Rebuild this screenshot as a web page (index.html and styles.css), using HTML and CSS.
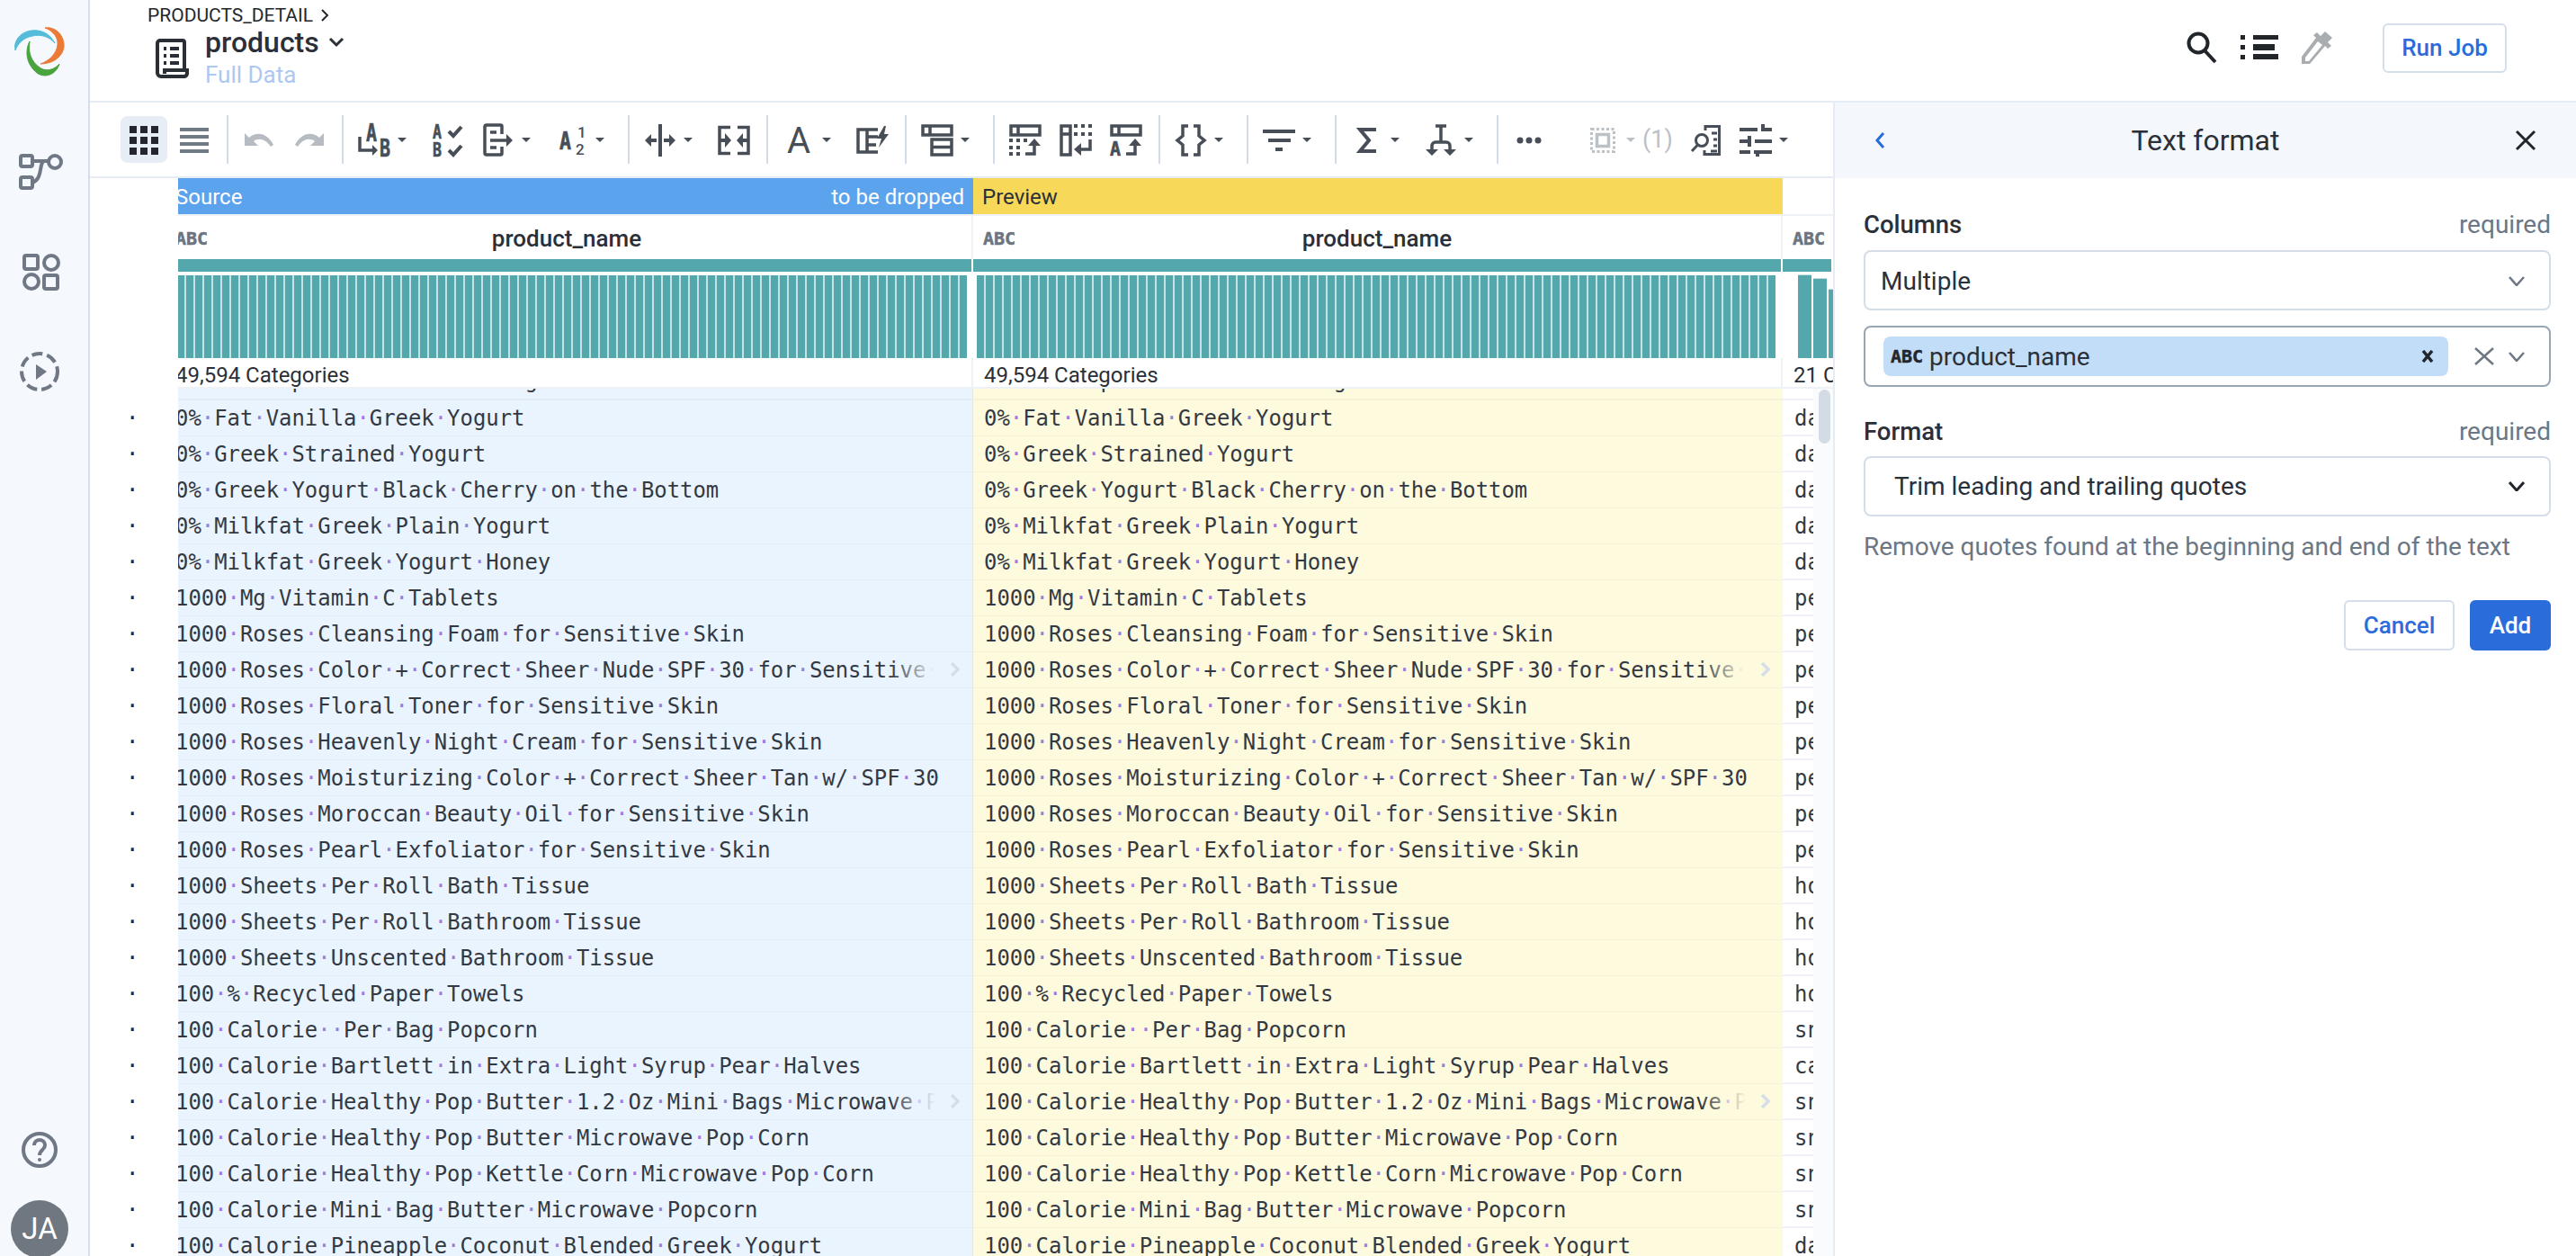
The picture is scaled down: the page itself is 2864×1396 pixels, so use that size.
FILE: index.html
```html
<!DOCTYPE html>
<html lang="en">
  <head>
    <meta charset="UTF-8" />
    <title>products - Full Data</title>
    <link rel="stylesheet" href="styles.css">
  </head>
  <body>
    <div class="app">
      <nav class="sidebar">
        <svg class="logo" viewBox="0 0 56 56">
          <g transform="translate(-16 -30)">
            <path fill="#55bcd9" stroke="#55bcd9" d="M17 56C14 42 28 32 42 34C50 35 57 40 61 48C54 40 45 38 36 40C26 42 20 48 17 56Z" />
            <path fill="#ec7a37" stroke="#ec7a37" d="M50 31C62 29 72 40 71 52C70 62 60 71 45 71C54 68 63 60 64 50C65 42 59 34 50 31Z" />
            <path fill="#4aa43e" stroke="#4aa43e" d="M33 46C27 58 30 72 41 81C49 87 62 84 66 71C60 78 51 80 44 75C34 68 31 57 33 46Z" />
          </g>
        </svg>
        <div class="side-nav">
          <svg class="side-icon" viewBox="0 0 56 44">
            <rect x="7" y="4" width="13" height="12" rx="2" />
            <rect x="7" y="28" width="13" height="12" rx="2" />
            <circle cx="45" cy="11" r="7" />
            <path d="M20 10H38M33 10C27 12 32 30 20 34" />
          </svg>
          <svg class="side-icon" viewBox="0 0 56 44">
            <rect x="11" y="4" width="15" height="15" rx="2" />
            <circle cx="41" cy="12" r="8" />
            <circle cx="19" cy="33" r="8" />
            <rect x="33" y="26" width="15" height="15" rx="2" />
          </svg>
          <svg class="side-icon" viewBox="0 0 56 44">
            <circle class="dashed" cx="28" cy="22" r="20" />
            <path class="solid" d="M24 14L36 22L24 31Z" />
          </svg>
        </div>
        <div class="side-bottom">
          <svg class="side-icon help" viewBox="0 0 56 44">
            <circle cx="28" cy="22" r="18" />
            <path d="M22 17C22 9 34 9 34 17C34 22 28 22 28 28" />
            <circle class="solid" cx="28" cy="33" r="2" />
          </svg>
          <div class="avatar">JA</div>
        </div>
      </nav>

      <div class="main">
        <header class="topbar">
          <div class="top-left">
            <div class="crumb">PRODUCTS_DETAIL
              <svg class="crumb-arrow" viewBox="0 0 10 16"><path d="M2 2L8 8L2 14" /></svg>
            </div>
            <div class="title-row">
              <svg class="doc-icon" viewBox="0 0 40 44">
                <path d="M5 38V5a3 3 0 0 1 3-3H33a2 2 0 0 1 2 2V35" />
                <path d="M5 38a4 4 0 0 0 4 4H35a4 4 0 0 0 3-3V35H13V39" />
                <path d="M12 11H15M19 11H29M12 19H15M19 19H29M12 27H15M19 27H29" />
              </svg>
              <div>
                <div class="title">products
                  <svg class="title-caret" viewBox="0 0 18 12"><path d="M2 2L9 9L16 2" /></svg>
                </div>
                <div class="subtitle">Full Data</div>
              </div>
            </div>
          </div>
          <div class="top-right">
            <svg class="top-icon" viewBox="0 0 36 36">
              <circle cx="14" cy="13" r="10.5" />
              <path d="M21 21L33 34" />
            </svg>
            <svg class="top-list" viewBox="0 0 42 28">
              <rect x="0" y="0" width="5" height="5" /><rect x="14" y="0" width="28" height="5" />
              <rect x="0" y="11" width="5" height="5" /><rect x="14" y="10" width="24" height="7" />
              <rect x="0" y="22" width="5" height="5" /><rect x="14" y="21" width="28" height="6" />
            </svg>
            <svg class="top-dropper" viewBox="0 0 36 36">
              <path d="M1 36V28L17 7L14 4L18 1L22 5L27 0L35 7L30 12L34 16L30 19L27 16L10 36Z" />
              <path class="cut" d="M5 29L19 11L24 15L9 33H5Z" />
            </svg>
            <button class="btn btn-run">Run Job</button>
          </div>
        </header>

        <div class="workspace">
          <section class="editor">
            <div class="toolbar">
              <div class="tb tb-active">
                <svg viewBox="0 0 36 36" class="dark">
                  <rect x="2" y="3" width="8" height="8" /><rect x="14" y="3" width="8" height="8" /><rect x="26" y="3" width="8" height="8" />
                  <rect x="2" y="15" width="8" height="8" /><rect x="14" y="15" width="8" height="8" /><rect x="26" y="15" width="8" height="8" />
                  <rect x="2" y="27" width="8" height="8" /><rect x="14" y="27" width="8" height="8" /><rect x="26" y="27" width="8" height="8" />
                </svg>
              </div>
              <div class="tb">
                <svg viewBox="0 0 36 36" class="mid">
                  <rect x="2" y="5" width="32" height="4" /><rect x="2" y="13" width="32" height="4" /><rect x="2" y="21" width="32" height="4" /><rect x="2" y="29" width="32" height="4" />
                </svg>
              </div>
              <i class="sep"></i>
              <div class="tb">
                <svg viewBox="0 0 36 36" class="off"><path d="M2 11V25H17L12 20C17 16 25 17 31 26L34 24C28 12 16 8 7 16Z" /></svg>
              </div>
              <div class="tb">
                <svg viewBox="0 0 36 36" class="off"><path transform="matrix(-1 0 0 1 36 0)" d="M2 11V25H17L12 20C17 16 25 17 31 26L34 24C28 12 16 8 7 16Z" /></svg>
              </div>
              <i class="sep"></i>
              <div class="tb tb-menu">
                <svg viewBox="0 0 36 36">
                  <text class="tl" x="9" y="20" textLength="12" lengthAdjust="spacingAndGlyphs">A</text>
                  <text class="tl" x="24" y="37" textLength="12" lengthAdjust="spacingAndGlyphs">B</text>
                  <path class="ln" d="M2 15V30H18" /><path d="M16 24L22 30L16 36Z" />
                </svg>
                <i class="caret"></i>
              </div>
              <div class="tb">
                <svg viewBox="0 0 36 36">
                  <text class="tl tl-sm" x="1" y="17" textLength="10" lengthAdjust="spacingAndGlyphs">A</text>
                  <text class="tl tl-sm" x="1" y="37" textLength="10" lengthAdjust="spacingAndGlyphs">B</text>
                  <path class="ln ln-4" d="M19 9L24 14L33 4M19 30L24 35L33 25" />
                </svg>
              </div>
              <div class="tb tb-menu">
                <svg viewBox="0 0 36 36">
                  <path class="ln" d="M22 12V3.5A1.5 1.5 0 0 0 20.500 2H5A2 2 0 0 0 3 4V33A2 2 0 0 0 5 35H20.500A1.500 1.500 0 0 0 22 33.500V26" />
                  <path class="ln" d="M9 10H16M9 19H29M9 27H16" /><path d="M27 12L34 19L27 26Z" />
                </svg>
                <i class="caret"></i>
              </div>
              <div class="tb tb-menu">
                <svg viewBox="0 0 36 36">
                  <text class="tl" x="4" y="29" textLength="13" lengthAdjust="spacingAndGlyphs">A</text>
                  <text class="tl-num" x="24" y="16">1</text>
                  <text class="tl-num" x="22" y="35">2</text>
                </svg>
                <i class="caret"></i>
              </div>
              <i class="sep"></i>
              <div class="tb tb-menu">
                <svg viewBox="0 0 36 36">
                  <rect x="16" y="1" width="4" height="36" />
                  <path d="M1 19L8 12V17H14V21H8V26ZM35 19L28 12V17H22V21H28V26Z" />
                </svg>
                <i class="caret"></i>
              </div>
              <div class="tb">
                <svg viewBox="0 0 36 36">
                  <path class="ln" d="M14 4.500H2V33.500H14M22 4.500H34V33.500H22" />
                  <path d="M8 11L15 19L8 27V21H2V17H8ZM28 11L21 19L28 27V21H34V17H28Z" />
                </svg>
              </div>
              <i class="sep"></i>
              <div class="tb tb-menu">
                <svg viewBox="0 0 36 36"><text class="tl-big" x="18" y="33" text-anchor="middle">A</text></svg>
                <i class="caret"></i>
              </div>
              <div class="tb">
                <svg viewBox="0 0 36 36">
                  <path class="ln" d="M24 7H2V32H24M12 7V32M12 15H24M12 24H22" />
                  <path d="M31 3L23 17H28L25 27L36 12H31L33 3Z" />
                </svg>
              </div>
              <i class="sep"></i>
              <div class="tb tb-menu">
                <svg viewBox="0 0 36 36">
                  <path class="ln" d="M2 3H34V13H2ZM10 3V13" />
                  <path class="ln" d="M12 18H34V35H12ZM12 26.500H34" />
                </svg>
                <i class="caret"></i>
              </div>
              <i class="sep"></i>
              <div class="tb">
                <svg viewBox="0 0 36 36">
                  <path class="ln" d="M2 3H34V13H2ZM10 3V13" />
                  <rect x="0" y="17" width="4" height="4" /><rect x="8" y="17" width="4" height="4" /><rect x="16" y="17" width="4" height="4" />
                  <rect x="0" y="25" width="4" height="4" /><rect x="8" y="25" width="4" height="4" />
                  <rect x="0" y="32" width="4" height="4" /><rect x="8" y="32" width="4" height="4" />
                  <path class="ln" d="M18 34H28V22" /><path d="M21 25L28 17L35 25Z" />
                </svg>
              </div>
              <div class="tb">
                <svg viewBox="0 0 36 36">
                  <path class="ln" d="M2 3H12V35H2ZM2 12H12" />
                  <rect x="16" y="1" width="4" height="4" /><rect x="24" y="1" width="4" height="4" /><rect x="32" y="1" width="4" height="4" />
                  <rect x="16" y="10" width="4" height="4" /><rect x="24" y="10" width="4" height="4" /><rect x="32" y="10" width="4" height="4" />
                  <path class="ln" d="M34 18V29H22" /><path d="M24 22L16 29L24 36Z" />
                </svg>
              </div>
              <div class="tb">
                <svg viewBox="0 0 36 36">
                  <path class="ln" d="M2 3H34V13H2ZM10 3V13" />
                  <text class="tl tl-sm" x="0" y="36" textLength="12" lengthAdjust="spacingAndGlyphs">A</text>
                  <path class="ln" d="M18 34H28V22" /><path d="M21 25L28 17L35 25Z" />
                </svg>
              </div>
              <i class="sep"></i>
              <div class="tb tb-menu">
                <svg viewBox="0 0 36 36"><path class="ln" d="M15 3H9V14L3 19L9 24V35H15M21 3H27V14L33 19L27 24V35H21" /></svg>
                <i class="caret"></i>
              </div>
              <i class="sep"></i>
              <div class="tb tb-menu">
                <svg viewBox="0 0 36 36">
                  <rect x="0" y="7" width="36" height="4" /><rect x="6" y="17" width="25" height="4" /><rect x="14" y="27" width="8" height="4" />
                </svg>
                <i class="caret"></i>
              </div>
              <i class="sep"></i>
              <div class="tb tb-menu">
                <svg viewBox="0 0 36 36"><path class="ln ln-4" d="M28 7H10L20 19L10 31H28" /></svg>
                <i class="caret"></i>
              </div>
              <div class="tb tb-menu">
                <svg viewBox="0 0 36 36">
                  <path class="ln" d="M12 3H24M18 3V20M8 30V25A4 4 0 0 1 12 21H24A4 4 0 0 1 28 25V30" />
                  <path d="M1 29L8 36L15 29ZM21 29L28 36L35 29Z" />
                </svg>
                <i class="caret"></i>
              </div>
              <i class="sep"></i>
              <div class="tb">
                <svg viewBox="0 0 36 36"><circle cx="8" cy="19" r="3.500" /><circle cx="18" cy="19" r="3.500" /><circle cx="28" cy="19" r="3.500" /></svg>
              </div>
              <div class="tb tb-select">
                <svg viewBox="0 0 36 36" class="off">
                  <rect class="dotted" x="5.500" y="6.500" width="25" height="25" />
                  <rect class="ln off-ln" x="11.500" y="12.500" width="13" height="13" />
                </svg>
                <i class="caret caret-off"></i>
                <span class="count">(1)</span>
              </div>
              <div class="tb">
                <svg viewBox="0 0 36 36">
                  <path class="ln ln-3" d="M18 8V3.500H33.500V34.500H17V30" />
                  <path class="ln ln-3" d="M25 11H31M27 18H31M27 25H31M24 31H31" />
                  <circle class="ln ln-3" cx="14" cy="19" r="6.500" />
                  <path class="ln ln-3" d="M9.500 24L3 31" />
                </svg>
              </div>
              <div class="tb tb-menu">
                <svg viewBox="0 0 36 36">
                  <rect x="0" y="5" width="20" height="4" /><rect x="24" y="1" width="4" height="8" /><rect x="28" y="5" width="8" height="4" />
                  <rect x="0" y="18" width="9" height="4" /><rect x="9" y="14" width="4" height="12" /><rect x="17" y="18" width="19" height="4" />
                  <rect x="0" y="30" width="12" height="4" /><rect x="16" y="30" width="20" height="4" /><rect x="18" y="30" width="4" height="7" />
                </svg>
                <i class="caret"></i>
              </div>
            </div>

            <div class="grid-line bands">
              <div></div>
              <div class="band band-source"><span>Source</span><span>to be dropped</span></div>
              <div class="band band-preview">Preview</div>
              <div class="band"></div>
            </div>
            <div class="grid-line heads">
              <div></div>
              <div class="head head-source"><span class="abc">ABC</span><span class="head-name">product_name</span></div>
              <div class="head"><span class="abc">ABC</span><span class="head-name">product_name</span></div>
              <div class="head head-last"><span class="abc">ABC</span></div>
            </div>
            <div class="grid-line charts">
              <div></div>
              <div class="chart chart-source"><div class="chart-top"></div><div class="bars bars-source"></div></div>
              <div class="chart"><div class="chart-top"></div><div class="bars bars-preview"></div></div>
              <div class="chart chart-last">
                <div class="chart-top"></div>
                <div class="bars-few"><i class="bar-a"></i><i class="bar-b"></i><i class="bar-c"></i></div>
              </div>
            </div>
            <div class="grid-line counts">
              <div></div>
              <div class="count-cell count-source">49,594 Categories</div>
              <div class="count-cell">49,594 Categories</div>
              <div class="count-cell count-last">21 Categories</div>
            </div>
            <div class="rows" id="rows">
              <div class="thumb"></div>
            </div>
          </section>

          <aside class="panel">
            <div class="panel-head">
              <svg class="back" viewBox="0 0 12 20"><path d="M10 2L3 10L10 18" /></svg>
              <div class="panel-title">Text format</div>
              <svg class="close" viewBox="0 0 24 24"><path d="M2 2L22 22M22 2L2 22" /></svg>
            </div>
            <div class="panel-body">
              <div class="field-label"><span class="label-name">Columns</span><span class="label-req">required</span></div>
              <div class="select select-first">
                <span>Multiple</span>
                <svg class="chev" viewBox="0 0 18 11"><path d="M1 1L9 10L17 1" /></svg>
              </div>
              <div class="select select-multi">
                <div class="chip">
                  <span class="abc abc-chip">ABC</span>
                  <span class="chip-name">product_name</span>
                  <svg class="chip-x" viewBox="0 0 14 14"><path d="M2 1L12 13M12 1L2 13" /></svg>
                </div>
                <svg class="clear" viewBox="0 0 22 20"><path d="M1 1L21 19M21 1L1 19" /></svg>
                <svg class="chev" viewBox="0 0 18 11"><path d="M1 1L9 10L17 1" /></svg>
              </div>
              <div class="field-label field-format"><span class="label-name">Format</span><span class="label-req">required</span></div>
              <div class="select select-format">
                <span>Trim leading and trailing quotes</span>
                <svg class="chev chev-dark" viewBox="0 0 18 11"><path d="M1 1L9 10L17 1" /></svg>
              </div>
              <p class="help-text">Remove quotes found at the beginning and end of the text</p>
              <div class="actions">
                <button class="btn btn-cancel">Cancel</button>
                <button class="btn btn-add">Add</button>
              </div>
            </div>
          </aside>
        </div>
      </div>
    </div>
    <script src="script.js"></script>
  </body>
</html>
```

FILE: styles.css
```css
* {
  box-sizing: border-box;
}
body {
  margin: 0;
  font-family: Roboto, Arial, sans-serif;
  color: #2b3038;
  background-color: #fff;
}
.app {
  display: flex;
  height: 100vh;
  overflow: hidden;
}

/* left rail */
.sidebar {
  width: 100px;
  flex: none;
  display: flex;
  flex-direction: column;
  align-items: center;
  padding-right: 10px;
  background-color: #f5f8fd;
  border-right: 2px solid #d5deea;
  overflow: hidden;
}
.logo {
  width: 56px;
  height: 56px;
  margin-top: 30px;
}
.side-nav {
  display: flex;
  flex-direction: column;
  gap: 67px;
  margin-top: 83px;
}
.side-icon {
  display: block;
  width: 56px;
  height: 44px;
  fill: none;
  stroke: #6f7884;
  stroke-width: 4;
}
.side-icon .dashed {
  stroke-dasharray: 12 5;
}
.side-icon .solid {
  fill: #6f7884;
  stroke: none;
}
.side-bottom {
  margin-top: auto;
  display: flex;
  flex-direction: column;
  align-items: center;
}
.help {
  margin-bottom: 34px;
}
.avatar {
  width: 64px;
  height: 64px;
  margin-bottom: -2px;
  border-radius: 50%;
  background-color: #6f7780;
  color: #fff;
  font-size: 33px;
  line-height: 64px;
  text-align: center;
}

.main {
  flex: 1;
  min-width: 0;
  display: flex;
  flex-direction: column;
}

/* top bar */
.topbar {
  height: 114px;
  flex: none;
  display: flex;
  justify-content: space-between;
  padding-left: 64px;
  border-bottom: 2px solid #e6ecf4;
}
.crumb {
  display: flex;
  align-items: center;
  gap: 8px;
  height: 22px;
  margin-top: 6px;
  font-size: 21px;
  color: #23272d;
}
.crumb-arrow {
  width: 10px;
  height: 16px;
  fill: none;
  stroke: #23272d;
  stroke-width: 2;
}
.title-row {
  display: flex;
  align-items: flex-start;
  gap: 18px;
  margin-left: 6px;
  margin-top: -1px;
}
.doc-icon {
  width: 40px;
  height: 44px;
  margin-top: 16px;
  fill: none;
  stroke: #2a2f36;
  stroke-width: 4;
}
.title {
  display: flex;
  align-items: center;
  gap: 10px;
  height: 40px;
  font-size: 32px;
  font-weight: 500;
}
.title-caret {
  width: 18px;
  height: 12px;
  fill: none;
  stroke: #2b3038;
  stroke-width: 3;
}
.subtitle {
  height: 32px;
  line-height: 32px;
  font-size: 26px;
  color: #adc8f0;
}
.top-right {
  display: flex;
  align-items: center;
  gap: 25px;
  padding-right: 77px;
  padding-bottom: 6px;
}
.top-icon {
  width: 36px;
  height: 36px;
  fill: none;
  stroke: #22262b;
  stroke-width: 4;
}
.top-list {
  width: 42px;
  height: 28px;
  fill: #22262b;
}
.top-dropper {
  width: 36px;
  height: 36px;
  fill: #aaadb0;
}
.top-dropper .cut {
  fill: #fff;
}
.btn {
  font-family: Roboto, Arial, sans-serif;
  font-size: 26px;
  font-weight: 500;
  border-radius: 6px;
  cursor: pointer;
  padding: 0;
}
.btn-run {
  width: 138px;
  height: 55px;
  margin-left: 30px;
  background-color: #fff;
  border: 2px solid #d5deea;
  color: #2b6cdb;
}

.workspace {
  flex: 1;
  min-height: 0;
  display: flex;
}
.editor {
  width: 1938px;
  flex: none;
  display: flex;
  flex-direction: column;
}

/* toolbar */
.toolbar {
  height: 84px;
  flex: none;
  display: flex;
  align-items: center;
  padding: 0 32px;
  border-bottom: 2px solid #e6ecf4;
}
.tb {
  width: 56px;
  height: 52px;
  flex: none;
  display: flex;
  align-items: center;
  padding-left: 10px;
}
.tb svg {
  width: 36px;
  height: 36px;
  flex: none;
  overflow: visible;
  fill: #474e57;
}
.tb svg.dark {
  fill: #23272d;
}
.tb svg.mid {
  fill: #707a84;
}
.tb svg.off {
  fill: #b6bcc2;
}
.tb-active {
  position: relative;
  z-index: 0;
}
.tb-active::before {
  content: "";
  position: absolute;
  z-index: -1;
  top: 0;
  bottom: 0;
  left: 2px;
  right: 2px;
  border-radius: 8px;
  background-color: #e7edf5;
}
.tb-menu {
  width: 82px;
}
.tb-select {
  width: 114px;
  margin-left: auto;
}
.sep {
  width: 2px;
  height: 54px;
  flex: none;
  margin: 0 6px 0 8px;
  background-color: #d3dbe6;
}
.caret {
  width: 0;
  height: 0;
  flex: none;
  margin-left: 8px;
  border-left: 5px solid transparent;
  border-right: 5px solid transparent;
  border-top: 5px solid #474e57;
}
.caret-off {
  border-top-color: #bcc1c6;
}
.count {
  margin-left: 8px;
  font-size: 27px;
  color: #bcc1c6;
}
.ln {
  fill: none;
  stroke: #474e57;
  stroke-width: 3.5;
}
.ln-3 {
  stroke-width: 3;
}
.ln-4 {
  stroke-width: 4;
}
.off-ln {
  stroke: #bcc1c6;
}
.dotted {
  fill: none;
  stroke: #bcc1c6;
  stroke-width: 3;
  stroke-dasharray: 3 2.5;
}
.tl {
  font-family: "DejaVu Sans Mono", monospace;
  font-weight: 700;
  font-size: 26px;
  stroke: #474e57;
  stroke-width: 0.6;
}
.tl-sm {
  font-size: 21px;
}
.tl-num {
  font-family: Roboto, sans-serif;
  font-weight: 500;
  font-size: 17px;
}
.tl-big {
  font-family: Roboto, sans-serif;
  font-weight: 400;
  font-size: 40px;
}

/* data grid */
.grid-line,
.row {
  display: grid;
  grid-template-columns: 98px 884px 900px 56px;
}
.bands {
  height: 42px;
  flex: none;
  font-size: 24px;
}
.band {
  line-height: 43px;
  overflow: hidden;
  white-space: nowrap;
  border-bottom: 2px solid #eef1f5;
}
.band-source {
  display: flex;
  justify-content: space-between;
  padding-right: 10px;
  background-color: #5ca3ee;
  color: #fff;
  text-indent: -3px;
}
.band-preview {
  padding-left: 10px;
  background-color: #f7d858;
}
.heads {
  height: 48px;
  flex: none;
}
.head {
  display: flex;
  align-items: center;
  justify-content: center;
  position: relative;
  padding-top: 2px;
  border-right: 2px solid #eef1f5;
  overflow: hidden;
}
.head-source {
  padding-right: 18px;
}
.head-name {
  font-size: 26px;
  font-weight: 500;
}
.abc {
  position: absolute;
  left: 11px;
  top: 14px;
  font-family: "DejaVu Sans Mono", monospace;
  font-size: 20px;
  line-height: 22px;
  font-weight: 700;
  color: #6b7480;
  -webkit-text-stroke: 0.5px currentColor;
}
.head-source .abc {
  left: -3px;
}
.head-last {
  border-right: none;
}
.charts {
  height: 110px;
  flex: none;
}
.chart {
  padding-right: 2px;
  overflow: hidden;
}
.chart-top {
  height: 14px;
  background-color: #54a7ac;
}
.bars {
  height: 92px;
  margin-top: 4px;
  background: linear-gradient(90deg, #54a7ac 8px, #c4e3e3 8px) 0 0 / 10px 100% repeat-x;
}
.bars-source {
  width: 877px;
  background-position-x: -1px;
}
.bars-preview {
  width: 888px;
  margin-left: 4px;
}
.bars-few {
  display: flex;
  align-items: flex-end;
  gap: 2px;
  height: 92px;
  margin: 4px 0 0 17px;
}
.bars-few i {
  width: 15px;
  flex: none;
  background-color: #54a7ac;
  box-shadow: 0 -1px 0 #c4e3e3;
}
.bar-a {
  height: 92px;
}
.bar-b {
  height: 88px;
}
.bar-c {
  height: 76px;
}
.counts {
  height: 34px;
  flex: none;
}
.count-cell {
  padding-left: 12px;
  font-size: 24px;
  line-height: 38px;
  white-space: nowrap;
  overflow: hidden;
  border-right: 2px solid #eef1f5;
  border-bottom: 2px solid #eef1f5;
}
.count-source {
  padding-left: 0;
  text-indent: -3px;
}
.count-last {
  border-right: none;
}
.rows {
  flex: 1;
  min-height: 0;
  position: relative;
  overflow: hidden;
}
.thumb {
  position: absolute;
  z-index: 1;
  top: 1px;
  right: 3px;
  width: 13px;
  height: 60px;
  border-radius: 7px;
  background-color: #d3dbe5;
}
.row {
  height: 40px;
  font-family: "DejaVu Sans Mono", monospace;
  font-size: 23.900px;
  line-height: 41px;
  color: #333942;
  white-space: pre;
}
.row-top {
  height: 13px;
  overflow: hidden;
}
.row-top > div {
  margin-top: -27px;
  height: 40px;
  line-height: 37px;
}
.row-num {
  padding-left: 40px;
  color: #23272d;
}
.sp {
  color: #9a7be0;
}
.cell {
  position: relative;
  overflow: hidden;
  border-bottom: 2px solid transparent;
}
.cell-source {
  background-color: #eaf4fe;
  border-right: 1px solid #dde8f4;
  border-bottom-color: #e3edf7;
  text-indent: -3px;
}
.cell-preview {
  padding-left: 12px;
  background-color: #fefadd;
  border-bottom-color: #f6f2d8;
}
.cell-last {
  background-color: #fafbfd;
}
.cell-last span {
  display: block;
  width: 34px;
  height: 40px;
  padding-left: 13px;
  overflow: hidden;
  background-color: #fff;
  border-bottom: 2px solid #eff2f6;
}
.fade {
  position: absolute;
  top: 0;
  right: 0;
  bottom: 0;
  width: 91px;
}
.cell-source .fade {
  background: linear-gradient(90deg, rgba(234, 244, 254, 0), #eaf4fe 55%);
}
.cell-preview .fade {
  background: linear-gradient(90deg, rgba(254, 250, 221, 0), #fefadd 55%);
}
.fade svg {
  position: absolute;
  right: 14px;
  top: 10px;
  width: 11px;
  height: 18px;
  fill: none;
  stroke: #d5deea;
  stroke-width: 3.500;
}

/* right panel */
.panel {
  flex: 1;
  min-width: 0;
  border-left: 2px solid #e6ecf4;
}
.panel-head {
  height: 84px;
  display: flex;
  align-items: center;
  justify-content: space-between;
  padding: 0 44px;
  background-color: #f4f7fc;
}
.back {
  width: 12px;
  height: 20px;
  margin-right: 12px;
  fill: none;
  stroke: #2b6cdb;
  stroke-width: 3;
}
.panel-title {
  font-size: 32px;
}
.close {
  width: 24px;
  height: 24px;
  fill: none;
  stroke: #23272d;
  stroke-width: 3;
}
.panel-body {
  padding: 30px 28px 0 32px;
}
.field-label {
  display: flex;
  justify-content: space-between;
  height: 40px;
  line-height: 43px;
  font-size: 28px;
}
.label-name {
  font-weight: 500;
  font-size: 27.500px;
}
.label-req {
  color: #6b7785;
}
.field-format {
  margin-top: 28px;
}
.select {
  height: 67px;
  margin-top: 10px;
  display: flex;
  align-items: center;
  justify-content: space-between;
  padding: 0 27px 0 17px;
  border: 2px solid #d5dde8;
  border-radius: 8px;
  font-size: 28px;
}
.select-first {
  padding-top: 2px;
}
.select-multi {
  height: 68px;
  margin-top: 17px;
  padding-left: 20px;
  border-color: #9aa5b4;
}
.select-format {
  height: 67px;
  margin-top: 9px;
  padding-left: 32px;
}
.chev {
  width: 18px;
  height: 11px;
  flex: none;
  fill: none;
  stroke: #6e7884;
  stroke-width: 2.500;
}
.chev-dark {
  stroke: #23272d;
  stroke-width: 3;
}
.chip {
  width: 628px;
  height: 44px;
  flex: none;
  position: relative;
  display: flex;
  align-items: center;
  padding: 0 16px 0 51px;
  border-radius: 8px;
  background-color: #c2ddf8;
}
.abc-chip {
  left: 8px;
  top: 11px;
  color: #23272d;
}
.chip-name {
  flex: 1;
}
.chip-x {
  width: 14px;
  height: 14px;
  fill: none;
  stroke: #23272d;
  stroke-width: 3.500;
}
.clear {
  width: 22px;
  height: 20px;
  flex: none;
  margin-left: auto;
  margin-right: 16px;
  fill: none;
  stroke: #6e7884;
  stroke-width: 2.500;
}
.help-text {
  margin: 16px 0 0;
  font-size: 28px;
  line-height: 36px;
  color: #6b7785;
}
.actions {
  display: flex;
  justify-content: flex-end;
  gap: 17px;
  margin-top: 41px;
}
.btn-cancel {
  width: 123px;
  height: 56px;
  background-color: #fff;
  border: 2px solid #d5deea;
  color: #2b6cdb;
}
.btn-add {
  width: 90px;
  height: 56px;
  background-color: #2b6cdb;
  border: none;
  color: #fff;
}
```

FILE: script.js
```js
// [product name, department]
var data = [
  ["0% Fat Supreme Chocolate Yogurt", "dairy eggs"],
  ["0% Fat Vanilla Greek Yogurt", "dairy eggs"],
  ["0% Greek Strained Yogurt", "dairy eggs"],
  ["0% Greek Yogurt Black Cherry on the Bottom", "dairy eggs"],
  ["0% Milkfat Greek Plain Yogurt", "dairy eggs"],
  ["0% Milkfat Greek Yogurt Honey", "dairy eggs"],
  ["1000 Mg Vitamin C Tablets", "personal care"],
  ["1000 Roses Cleansing Foam for Sensitive Skin", "personal care"],
  ["1000 Roses Color + Correct Sheer Nude SPF 30 for Sensitive Skin", "personal care"],
  ["1000 Roses Floral Toner for Sensitive Skin", "personal care"],
  ["1000 Roses Heavenly Night Cream for Sensitive Skin", "personal care"],
  ["1000 Roses Moisturizing Color + Correct Sheer Tan w/ SPF 30", "personal care"],
  ["1000 Roses Moroccan Beauty Oil for Sensitive Skin", "personal care"],
  ["1000 Roses Pearl Exfoliator for Sensitive Skin", "personal care"],
  ["1000 Sheets Per Roll Bath Tissue", "household"],
  ["1000 Sheets Per Roll Bathroom Tissue", "household"],
  ["1000 Sheets Unscented Bathroom Tissue", "household"],
  ["100 % Recycled Paper Towels", "household"],
  ["100 Calorie  Per Bag Popcorn", "snacks"],
  ["100 Calorie Bartlett in Extra Light Syrup Pear Halves", "canned goods"],
  ["100 Calorie Healthy Pop Butter 1.2 Oz Mini Bags Microwave Popcorn", "snacks"],
  ["100 Calorie Healthy Pop Butter Microwave Pop Corn", "snacks"],
  ["100 Calorie Healthy Pop Kettle Corn Microwave Pop Corn", "snacks"],
  ["100 Calorie Mini Bag Butter Microwave Popcorn", "snacks"],
  ["100 Calorie Pineapple Coconut Blended Greek Yogurt", "dairy eggs"]
];

function withDots(text) {
  return text.replace(/ /g, '<span class="sp">·</span>');
}

function valueCell(name, text) {
  var fade = "";
  if (text.length > 59) {
    fade = '<div class="fade"><svg viewBox="0 0 11 18"><path d="M2 2L9 9L2 16" /></svg></div>';
  }
  return '<div class="cell ' + name + '">' + withDots(text) + fade + "</div>";
}

var rows = document.getElementById("rows");
data.forEach(function (item, i) {
  var row = document.createElement("div");
  row.className = i === 0 ? "row row-top" : "row";
  row.innerHTML =
    '<div class="row-num">·</div>' +
    valueCell("cell-source", item[0]) +
    valueCell("cell-preview", item[0]) +
    '<div class="cell-last"><span>' + withDots(item[1]) + "</span></div>";
  rows.appendChild(row);
});
```
